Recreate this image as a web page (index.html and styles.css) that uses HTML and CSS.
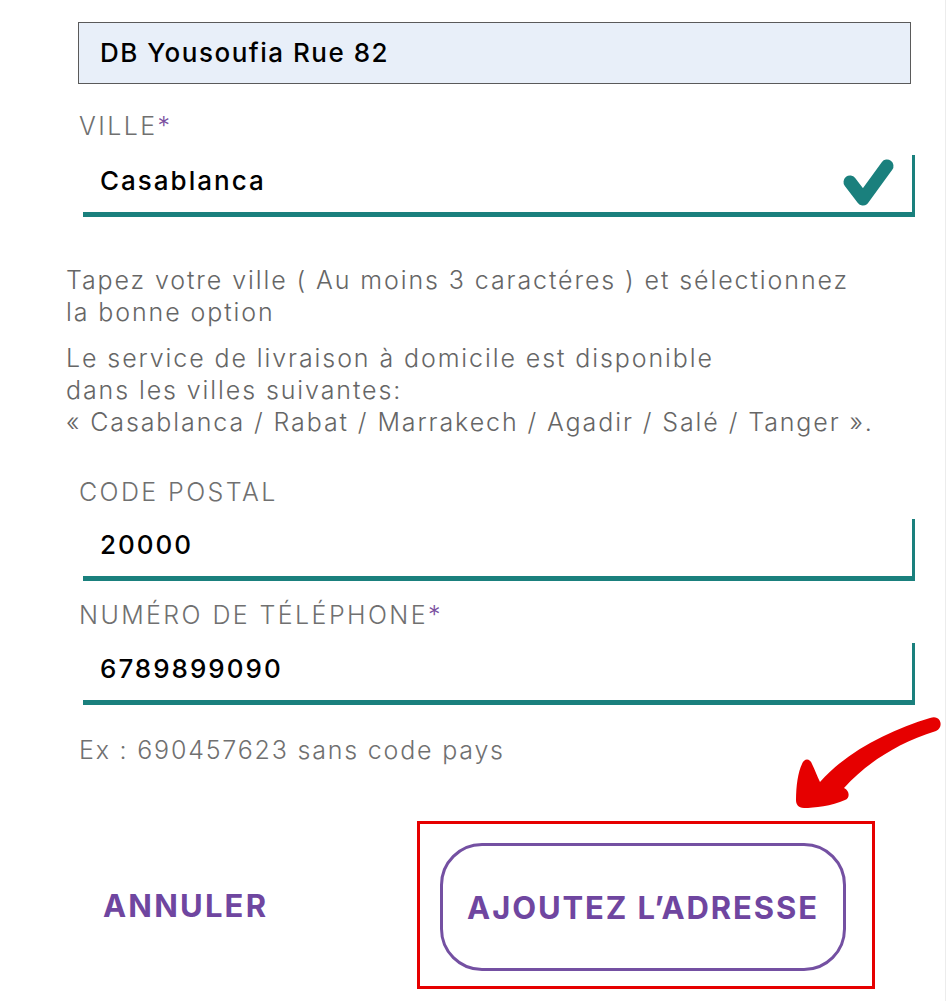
FILE: index.html
```html
<!DOCTYPE html>
<html>
<head>
<meta name="viewport" content="width=device-width, initial-scale=1">
<link rel="stylesheet" href="styles.css">
</head>
<body>

<div class="page">
  <div class="address-box">DB Yousoufia Rue 82</div>

  <label class="label label-ville">VILLE<span class="req">*</span></label>
  <div class="field">
    <span class="value">Casablanca</span>
    <svg class="check" width="60" height="56" viewBox="0 0 60 56">
      <path d="M10 28 L23 45 L47 12" fill="none" stroke="#1a807d" stroke-width="13" stroke-linecap="round" stroke-linejoin="round"/>
    </svg>
  </div>

  <p class="help help-first">Tapez votre ville ( Au moins 3 caractéres ) et sélectionnez<br>la bonne option</p>
  <p class="help help-second">Le service de livraison à domicile est disponible<br>dans les villes suivantes:<br>« Casablanca / Rabat / Marrakech / Agadir / Salé / Tanger ».</p>

  <label class="label label-postal">CODE POSTAL</label>
  <div class="field field-postal">
    <span class="value">20000</span>
  </div>

  <label class="label label-phone">NUMÉRO DE TÉLÉPHONE<span class="req">*</span></label>
  <div class="field field-phone">
    <span class="value">6789899090</span>
  </div>

  <p class="hint">Ex : 690457623 sans code pays</p>

  <div class="actions">
    <button type="button" class="cancelbtn">ANNULER</button>
    <div class="highlight">
      <button type="button" class="addbtn">AJOUTEZ L’ADRESSE</button>
    </div>
  </div>

  <!-- red annotation arrow pointing at the button -->
  <svg class="arrow" width="160" height="110" viewBox="0 0 160 110">
    <path d="M147 6 C 152 8, 152 17, 146 19 C 105 32, 76 52, 54 76 C 60 79, 60 86, 55 88 C 42 94, 24 96, 14 96 C 8 96, 6 92, 6 88 C 6 74, 8 60, 12 52 C 14 46, 20 46, 22 52 C 25 58, 27 64, 30 70 C 56 40, 100 18, 140 6 C 143 5, 145 5, 147 6 Z" fill="#e60000"/>
  </svg>
</div>

</body>
</html>
```

FILE: styles.css
```css
body {
  margin: 0;
  font-family: Inter, "Liberation Sans", sans-serif;
  background: #fff;
}

.page {
  position: relative;
  width: 879px;
  height: 979px;
  padding: 22px 0 0 66px;
  border-right: 1px solid #ececec;
  box-sizing: content-box;
}

.address-box {
  margin-left: 12px;
  width: 833px;
  height: 62px;
  box-sizing: border-box;
  border: 1px solid #5a5a5a;
  background-color: #e8eff9;
  padding: 0 0 2px 21px;
  display: flex;
  align-items: center;
  font-size: 26px;
  font-weight: 500;
  letter-spacing: 1.5px;
  color: #000;
}

.label {
  display: block;
  margin-left: 13px;
  font-size: 25px;
  line-height: 30px;
  font-weight: 300;
  letter-spacing: 2.4px;
  color: #707070;
}

.req {
  color: #7a4fa0;
  letter-spacing: 0;
}

.label-ville { margin-top: 27px; }
.label-postal { margin-top: 39px; }
.label-phone { margin-top: 19px; }

.field {
  margin: 14px 0 0 17px;
  width: 832px;
  height: 62px;
  box-sizing: border-box;
  border-right: 3px solid #1a807d;
  border-bottom: 5px solid #1a807d;
  padding: 0 0 6px 17px;
  display: flex;
  align-items: center;
  justify-content: space-between;
}

.field-postal { margin-top: 12px; }
.field-phone { margin-top: 13px; }

.value {
  font-size: 26px;
  font-weight: 500;
  letter-spacing: 2px;
  color: #000;
}

.check {
  margin-right: 12px;
  margin-top: 2px;
}

.help {
  margin: 0;
  font-size: 25px;
  line-height: 32px;
  font-weight: 300;
  letter-spacing: 1.9px;
  color: #666;
}

.help-first { margin-top: 47px; }
.help-second { margin-top: 14px; }

.hint {
  margin: 30px 0 0 13px;
  font-size: 25px;
  line-height: 30px;
  font-weight: 300;
  letter-spacing: 1.8px;
  color: #707070;
}

.actions {
  margin-top: 56px;
  display: flex;
  align-items: center;
}

.cancelbtn {
  background: none;
  border: none;
  margin-left: 37px;
  padding: 0;
  width: 314px;
  text-align: left;
  font-family: inherit;
  font-size: 31px;
  font-weight: 700;
  letter-spacing: 2.2px;
  color: #6f46a0;
  cursor: pointer;
}

.highlight {
  width: 458px;
  height: 168px;
  box-sizing: border-box;
  border: 3px solid #e60000;
  padding: 19px 0 0 20px;
}

.addbtn {
  width: 406px;
  height: 128px;
  border: 3px solid #7450a2;
  border-radius: 42px;
  background: #fff;
  font-family: inherit;
  font-size: 31px;
  font-weight: 700;
  letter-spacing: 1.9px;
  color: #6f46a0;
  cursor: pointer;
}

.arrow {
  position: absolute;
  left: 790px;
  top: 712px;
}
```
